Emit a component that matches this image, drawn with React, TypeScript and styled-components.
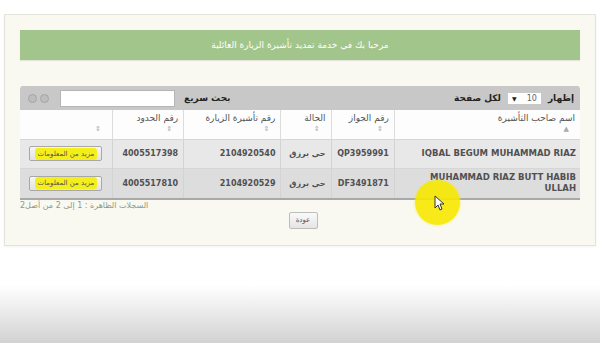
import styled, { createGlobalStyle } from 'styled-components';

const GlobalStyle = createGlobalStyle`
  html, body {
    margin: 0;
    padding: 0;
  }
  body {
    min-height: 343px;
    font-family: 'DejaVu Sans', sans-serif;
    background: linear-gradient(to bottom, #ffffff 0, #ffffff 285px, #d2d2d2 343px);
    overflow: hidden;
  }
`;

const S_Page = styled.div`
  position: relative;
  height: 343px;
  padding: 14px 4px 0;
  box-sizing: border-box;
`;

const S_Panel = styled.div`
  box-sizing: border-box;
  height: 232px;
  padding: 15px 15px 0;
  border: 1px solid #e3e3db;
  background-color: #f9f9f1;
  box-shadow: 0 1px 2px rgba(0, 0, 0, 0.05);
`;

const S_Banner = styled.div`
  height: 30px;
  display: flex;
  align-items: center;
  justify-content: center;
  background-color: #a2c58b;
  color: #ffffff;
  font-size: 9px;
  direction: rtl;
  box-shadow: 0 1px 1px rgba(0, 0, 0, 0.08);
`;

const S_TableBox = styled.div`
  margin-top: 26px;
  direction: rtl;
  border-bottom: 2px solid #a9a9a9;
`;

const S_Toolbar = styled.div`
  height: 24px;
  padding: 0 6px 0 8px;
  display: flex;
  align-items: center;
  justify-content: space-between;
  background-color: #c8c8c8;
  border-radius: 3px 3px 0 0;
  color: #222;
  font-size: 9px;
  font-weight: bold;
`;

const S_Group = styled.div`
  display: flex;
  align-items: center;
  gap: 7px;
`;

const S_Select = styled.div`
  width: 33px;
  height: 11px;
  box-sizing: border-box;
  padding: 0 4px;
  display: flex;
  align-items: center;
  justify-content: space-between;
  background-color: #ffffff;
  font-size: 8px;
  font-weight: normal;
  color: #666;

  & > .caret {
    font-size: 6px;
    color: #222;
  }
`;

const S_SearchInput = styled.div`
  width: 115px;
  height: 17px;
  margin-right: 2px;
  background-color: #ffffff;
  border: 1px solid #b5b5b5;
  box-sizing: border-box;
`;

const S_Dot = styled.span`
  width: 7px;
  height: 7px;
  border-radius: 50%;
  border: 1px solid #a5a5a5;
  background-color: #bdbdbd;
`;

const S_Dots = styled.div`
  display: flex;
  gap: 3px;
  margin-right: 4px;
`;

const S_Table = styled.table`
  width: 100%;
  table-layout: fixed;
  border-collapse: collapse;
  font-size: 8px;
  color: #555;
`;

const S_Th = styled.th<{ $w: number }>`
  width: ${(p) => p.$w}px;
  height: 29px;
  box-sizing: border-box;
  padding: 3px 5px 0;
  vertical-align: top;
  text-align: right;
  font-size: 9px;
  font-weight: normal;
  white-space: nowrap;
  background-color: #fdfdfd;
  border-left: 1px solid #dcdcdc;

  &:last-child {
    border-left: none;
  }

  & > .sort {
    display: block;
    margin-top: 3px;
    padding-right: 6px;
    font-size: 7px;
    color: #aaa;
    line-height: 1;
  }
`;

const S_Row = styled.tr<{ $shade: string }>`
  background-color: ${(p) => p.$shade};
`;

const S_Td = styled.td<{ $h: number }>`
  height: ${(p) => p.$h}px;
  padding: 0 5px;
  text-align: right;
  font-weight: bold;
  color: #505050;
  line-height: 11px;
  border-left: 1px solid #d3d3d3;
  border-top: 1px solid #d6d6d6;

  &.name {
    font-size: 8.5px;
    padding: 0 4px 0 14px;
  }

  &.nowrap {
    white-space: nowrap;
  }

  &:last-child {
    border-left: none;
    text-align: center;
  }
`;

const S_MoreButton = styled.button`
  width: 73px;
  height: 15px;
  padding: 0;
  border: 1px solid #a8a8a8;
  border-radius: 2px;
  background: linear-gradient(#f6f6f6, #e2e2e2);
  font-family: 'DejaVu Sans', sans-serif;
  font-size: 7px;
  color: #333;
  display: inline-flex;
  align-items: center;
  justify-content: center;

  & > mark {
    background-color: #f4ef1a;
    color: #555;
    padding: 2px 3px;
    border-radius: 3px;
  }
`;

const S_Info = styled.div`
  direction: rtl;
  text-align: left;
  margin-top: 1px;
  color: #8d9884;
  font-size: 8px;
`;

const S_Footer = styled.div`
  display: flex;
  justify-content: center;
  margin-top: 2px;
`;

const S_BackButton = styled.button`
  width: 29px;
  height: 17px;
  padding: 0;
  border: 1px solid #bdbdbd;
  border-radius: 2px;
  background: linear-gradient(#fafafa, #e4e4e4);
  font-family: 'DejaVu Sans', sans-serif;
  font-size: 7px;
  color: #555;
  margin-left: 6px;
`;

const S_Spot = styled.div`
  position: absolute;
  left: 415px;
  top: 180px;
  width: 45px;
  height: 45px;
  border-radius: 50%;
  background-color: rgba(246, 232, 0, 0.9);
  box-shadow: 0 0 3px rgba(246, 232, 0, 0.6);
`;

const S_Cursor = styled.svg`
  position: absolute;
  left: 434px;
  top: 195px;
`;

const columns = [
  { title: 'اسم صاحب التأشيرة', w: 185, sort: '▲' },
  { title: 'رقم الجواز', w: 63, sort: '⇕' },
  { title: 'الحالة', w: 50, sort: '⇕' },
  { title: 'رقم تأشيرة الزيارة', w: 97, sort: '⇕' },
  { title: 'رقم الحدود', w: 71, sort: '⇕' },
  { title: '', w: 92, sort: '⇕' },
];

const rows = [
  {
    name: 'IQBAL BEGUM MUHAMMAD RIAZ',
    passport: 'QP3959991',
    status: 'حي برزق',
    visa: '2104920540',
    border: '4005517398',
    shade: '#e8e8e8',
    h: 28,
  },
  {
    name: 'MUHAMMAD RIAZ BUTT HABIB ULLAH',
    passport: 'DF3491871',
    status: 'حي برزق',
    visa: '2104920529',
    border: '4005517810',
    shade: '#dddddd',
    h: 29,
  },
];

function App() {
  return (
    <>
      <GlobalStyle />
      <S_Page>
        <S_Panel>
          <S_Banner>مرحبا بك في خدمة تمديد تأشيرة الزيارة العائلية</S_Banner>

          <S_TableBox>
            <S_Toolbar>
              <S_Group>
                <span>إظهار</span>
                <S_Select>
                  <span>10</span>
                  <span className='caret'>▼</span>
                </S_Select>
                <span>لكل صفحة</span>
              </S_Group>
              <S_Group>
                <span>بحث سريع</span>
                <S_SearchInput />
                <S_Dots>
                  <S_Dot />
                  <S_Dot />
                </S_Dots>
              </S_Group>
            </S_Toolbar>

            <S_Table>
              <thead>
                <tr>
                  {columns.map((c, i) => (
                    <S_Th key={i} $w={c.w}>
                      {c.title || '\u00a0'}
                      <span className='sort'>{c.sort}</span>
                    </S_Th>
                  ))}
                </tr>
              </thead>
              <tbody>
                {rows.map((r) => (
                  <S_Row key={r.passport} $shade={r.shade}>
                    <S_Td $h={r.h} className='name'>{r.name}</S_Td>
                    <S_Td $h={r.h} className='nowrap'>{r.passport}</S_Td>
                    <S_Td $h={r.h} className='nowrap'>{r.status}</S_Td>
                    <S_Td $h={r.h} className='nowrap'>{r.visa}</S_Td>
                    <S_Td $h={r.h} className='nowrap'>{r.border}</S_Td>
                    <S_Td $h={r.h}>
                      <S_MoreButton>
                        <mark>مزيد من المعلومات</mark>
                      </S_MoreButton>
                    </S_Td>
                  </S_Row>
                ))}
              </tbody>
            </S_Table>
          </S_TableBox>

          <S_Info>السجلات الظاهرة : 1 إلى 2 من أصل2</S_Info>
          <S_Footer>
            <S_BackButton>عودة</S_BackButton>
          </S_Footer>
        </S_Panel>

        <S_Spot />
        <S_Cursor width='11' height='16' viewBox='0 0 11 16'>
          <path d='M1 1 L1 13 L4 10 L6 15 L8 14 L6 9 L10 9 Z' fill='#ffffff' stroke='#333' strokeWidth='1' strokeLinejoin='round' />
        </S_Cursor>
      </S_Page>
    </>
  );
}

export default App;
